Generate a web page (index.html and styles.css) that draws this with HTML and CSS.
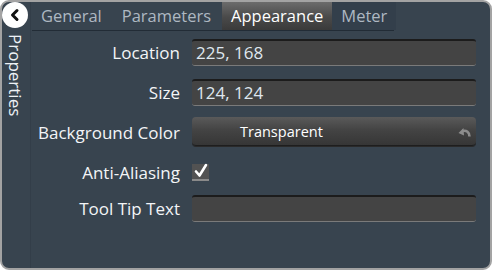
FILE: index.html
```html
<!DOCTYPE html>
<html>
<head>
<meta charset="utf-8">
<link rel="stylesheet" href="styles.css">
</head>
<body>
<div class="window">
  <aside class="side">
    <button class="back" aria-label="Back">
      <svg width="26" height="26" viewBox="0 0 26 26"><circle cx="13" cy="13" r="13" fill="#fff"/><path d="M15 8.5 L10.5 13 L15 17.5" fill="none" stroke="#111" stroke-width="3" stroke-linecap="round" stroke-linejoin="round"/></svg>
    </button>
    <div class="side-title">Properties</div>
  </aside>
  <main class="main">
    <nav class="tabs">
      <div class="tab">General</div>
      <div class="tab">Parameters</div>
      <div class="tab active">Appearance</div>
      <div class="tab dark">Meter</div>
    </nav>
    <div class="form">
      <label class="lbl">Location</label>
      <div class="field">225, 168</div>
      <label class="lbl">Size</label>
      <div class="field">124, 124</div>
      <label class="lbl">Background Color</label>
      <div class="btn">
        <span class="btn-text">Transparent</span>
        <svg class="reset" width="14" height="10" viewBox="0 0 14 10"><path d="M12.5 9.5 C12.5 5 9.5 3 5.5 4" fill="none" stroke="#8c8c8c" stroke-width="2.6"/><path d="M1.5 6 L6.5 1 L7 8.5 Z" fill="#8c8c8c"/></svg>
      </div>
      <label class="lbl">Anti-Aliasing</label>
      <div class="check">
        <svg width="18" height="18" viewBox="0 0 18 18"><path d="M4 9.5 L7.5 13.5 L14 3" fill="none" stroke="#fff" stroke-width="2.6" stroke-linecap="round" stroke-linejoin="round"/></svg>
      </div>
      <label class="lbl">Tool Tip Text</label>
      <div class="field"></div>
    </div>
  </main>
</div>
</body>
</html>
```
FILE: styles.css
```css
* { box-sizing: border-box; }
html, body { margin: 0; padding: 0; background: #fff; }
body { font-family: "Open Sans", "Noto Sans", sans-serif; }

.window {
  width: 492px;
  height: 270px;
  border: 2px solid #a3a3a3;
  border-radius: 9px;
  background: #38444f;
  display: grid;
  grid-template-columns: 29px 1fr;
  overflow: hidden;
}

.side {
  display: flex;
  flex-direction: column;
  align-items: flex-start;
  border-right: 1px solid #333e49;
}
.back {
  width: 26px; height: 26px;
  padding: 0; margin: 0;
  border: 0; background: none;
  display: block;
}
.back svg { display: block; }
.side-title {
  writing-mode: vertical-rl;
  color: #eef2f6;
  font-size: 17px;
  line-height: 20px;
  margin: 6px 0 0 3px;
}

.main { display: flex; flex-direction: column; }

.tabs {
  display: flex;
  height: 30px;
  margin-top: -1px;
  margin-left: 1px;
  width: 362px;
  border-bottom: 1px solid #222c36;
}
.tab {
  color: #aeb8c2;
  font-size: 16.5px;
  line-height: 28px;
  padding: 1px 9px 0 9px;
  margin-right: 2px;
}
.tab.active {
  color: #fff;
  background: linear-gradient(#6e6e6e, #4a4a4a 55%, #3a3a3a);
  margin-right: 0;
}
.tab.dark {
  background: #333f4b;
}

.form {
  display: grid;
  grid-template-columns: 150px 284px;
  grid-template-rows: 40px 40px 40px 40px 32px;
  column-gap: 12px;
  align-items: center;
  margin-left: -1px;
  margin-top: 1px;
}
.lbl {
  text-align: right;
  color: #f3f5f7;
  font-size: 17px;
  white-space: nowrap;
}
.field {
  height: 27px;
  background: #444;
  border-top: 2px solid #1c1c1c;
  border-bottom: 1px solid #7a7a7a;
  border-radius: 3px;
  color: #dfe7ef;
  font-size: 17px;
  line-height: 24px;
  padding-left: 4px;
}
.btn {
  height: 29px;
  margin-top: -1px;
  border-radius: 4px;
  background: linear-gradient(#5a5a5a, #444 45%, #363636);
  border-bottom: 1px solid #1e1e1e;
  box-shadow: 0 1px 0 #2a2a2a;
  display: flex;
  align-items: center;
  justify-content: space-between;
  padding: 0 5px 0 48px;
}
.btn-text { color: #fff; font-size: 14.5px; }
.reset { margin-top: 2px; }
.check {
  width: 17px; height: 17px;
  background: #525252;
  border-bottom: 2px solid #8a8a8a;
  position: relative;
}
.check svg { position: absolute; left: 0; top: -2px; }
```
